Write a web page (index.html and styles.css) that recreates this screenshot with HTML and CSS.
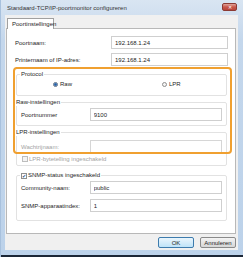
FILE: index.html
```html
<!DOCTYPE html>
<html lang="nl">
<head>
    <meta charset="UTF-8">
    <title>Standaard-TCP/IP-poortmonitor configureren</title>
    <link rel="stylesheet" href="styles.css">
</head>
<body>
    <div class="window">
        <div class="titlebar">
            <span class="title">Standaard-TCP/IP-poortmonitor configureren</span>
            <span class="close">&#x2715;</span>
        </div>
        <div class="client">
            <div class="tabs">
                <div class="tab">Poortinstellingen</div>
            </div>
            <div class="panel">
                <div class="row">
                    <label>Poortnaam:</label>
                    <input class="field wide" type="text" value="192.168.1.24">
                </div>
                <div class="row second">
                    <label>Printernaam of IP-adres:</label>
                    <input class="field wide" type="text" value="192.168.1.24">
                </div>

                <fieldset class="group protocol">
                    <legend>Protocol</legend>
                    <div class="radios">
                        <label class="option"><span class="radio checked"></span>Raw</label>
                        <label class="option"><span class="radio"></span>LPR</label>
                    </div>
                </fieldset>

                <fieldset class="group raw">
                    <legend class="flush">Raw-instellingen</legend>
                    <div class="row inner">
                        <label>Poortnummer</label>
                        <input class="field" type="text" value="9100">
                    </div>
                </fieldset>

                <fieldset class="group lpr">
                    <legend class="flush">LPR-instellingen</legend>
                    <div class="row inner">
                        <label class="disabled">Wachtrijnaam:</label>
                        <input class="field" type="text" value="" disabled>
                    </div>
                    <label class="option check-line disabled"><span class="check"></span>LPR-bytetelling ingeschakeld</label>
                </fieldset>

                <fieldset class="group snmp">
                    <legend><label class="option"><span class="check checked">&#x2714;</span>SNMP-status ingeschakeld</label></legend>
                    <div class="row inner">
                        <label>Community-naam:</label>
                        <input class="field" type="text" value="public">
                    </div>
                    <div class="row inner">
                        <label>SNMP-apparaatindex:</label>
                        <input class="field" type="text" value="1">
                    </div>
                </fieldset>

                <div class="highlight"></div>
            </div>
            <div class="buttons">
                <button class="btn default">OK</button>
                <button class="btn">Annuleren</button>
            </div>
        </div>
        <div class="bottom-edge"></div>
    </div>
</body>
</html>
```

FILE: styles.css
```css
body {
    margin: 0;
    padding: 0;
    font-family: 'Liberation Sans', Arial, sans-serif;
    font-size: 6px;
    color: #1e1e1e;
    background: #c2d6ec;
}

.window {
    width: 243px;
    height: 257px;
    overflow: hidden;
    background: linear-gradient(180deg, #d9e5f2, #c4d7ec 40px, #bcd2ea);
    box-sizing: border-box;
    border-left: 1px solid #a8c1dd;
    display: flex;
    flex-direction: column;
}

.titlebar {
    height: 15px;
    display: flex;
    align-items: center;
    padding-left: 6px;
    padding-right: 6px;
}

.title {
    color: #333;
    flex: 1;
}

.close {
    width: 15px;
    height: 8px;
    box-sizing: border-box;
    background: linear-gradient(180deg, #e0a39a, #c9574a 50%, #b8443a);
    border: 1px solid #8c3a33;
    border-radius: 2px;
    color: #fff;
    font-size: 5px;
    line-height: 6px;
    text-align: center;
    margin-top: -2px;
}

.client {
    margin-left: 4px;
    width: 233px;
    height: 235px;
    background: #f0f0f0;
    box-sizing: border-box;
    padding: 3px 2px 0 1px;
    display: flex;
    flex-direction: column;
}

.tabs {
    display: flex;
    padding-left: 1px;
    position: relative;
    z-index: 1;
}

.tab {
    height: 11px;
    padding: 0 4px;
    box-sizing: border-box;
    border: 1px solid #a0a0a0;
    border-bottom: none;
    background: #fff;
    line-height: 10px;
    width: 47px;
    margin-bottom: -1px;
}

.panel {
    position: relative;
    height: 206px;
    border: 1px solid #b8b8b8;
    background: #fff;
    box-sizing: border-box;
    padding: 7px 5px 0 8px;
}

.row {
    display: flex;
    align-items: center;
    height: 13px;
}

.row label {
    width: 96px;
}

.row.second {
    margin-top: 4px;
}

.field {
    height: 13px;
    box-sizing: border-box;
    border: 1px solid #cfcfcf;
    background: #fff;
    font: inherit;
    color: #1e1e1e;
    padding: 0 3px;
    margin: 0;
    outline: none;
}

.field.wide {
    width: 117px;
}

.group {
    margin: 0 3px 0 1px;
    padding: 0 4px;
    border: 1px solid #e2e2e2;
    border-radius: 2px;
    min-width: 0;
}

.group legend {
    padding: 0 1px;
    line-height: 7px;
    margin-left: -1px;
}

.group legend.flush {
    margin-left: -5px;
    padding-left: 0;
}

.protocol {
    margin-top: 5px;
    height: 25px;
    box-sizing: border-box;
}

.radios {
    display: grid;
    grid-template-columns: 109px 1fr;
    padding: 3px 0 0 32px;
}

.option {
    display: flex;
    align-items: center;
}

.radio {
    width: 5px;
    height: 5px;
    border: 1px solid #8e8f8f;
    border-radius: 50%;
    background: #f4f4f4;
    margin-right: 2px;
    box-sizing: border-box;
}

.radio.checked {
    border-color: #5d6f83;
    background: radial-gradient(circle, #2a5f9e 0, #3d7bc4 1.3px, #e8eef5 1.6px);
}

.raw {
    margin-top: 3px;
    height: 27px;
    box-sizing: border-box;
}

.inner label {
    width: 69px;
}

.inner .field {
    width: 133px;
}

.raw .inner {
    margin-top: 2px;
}

.lpr {
    margin-top: 3px;
    height: 37px;
    box-sizing: border-box;
}

.lpr .inner {
    margin-top: 4px;
}

.field:disabled {
    background: #fff;
    border-color: #d6d6d6;
}

.disabled {
    color: #a3a3a3;
}

.check-line {
    margin-top: 3px;
    margin-left: 1px;
}

.check {
    width: 6px;
    height: 6px;
    box-sizing: border-box;
    border: 1px solid #bdbdbd;
    background: #f4f4f4;
    margin-right: 1px;
    font-size: 5px;
    line-height: 4px;
    text-align: center;
    color: #2a4f80;
}

.check.checked {
    border-color: #8e8f8f;
    background: #fff;
}

.snmp {
    margin-top: 6px;
    height: 49px;
    box-sizing: border-box;
}

.snmp .inner {
    margin-top: 5px;
}

.snmp .inner:first-of-type {
    margin-top: 2px;
}

.highlight {
    position: absolute;
    left: 6px;
    top: 38px;
    width: 219px;
    height: 87px;
    box-sizing: border-box;
    border: 2px solid #f0a030;
    border-radius: 4px;
    pointer-events: none;
}

.buttons {
    display: flex;
    justify-content: flex-end;
    gap: 6px;
    margin-top: 3px;
}

.btn {
    width: 36px;
    height: 11px;
    box-sizing: border-box;
    font: inherit;
    color: #1e1e1e;
    background: linear-gradient(180deg, #f4f4f4, #e4e4e4 50%, #d6d6d6);
    border: 1px solid #8a8a8a;
    border-radius: 2px;
    padding: 0;
    cursor: pointer;
}

.btn.default {
    border-color: #3d7bad;
    background: linear-gradient(180deg, #eaf6fd, #d5ecfa 50%, #bee3f8);
}

.bottom-edge {
    margin-top: auto;
    height: 2px;
    background: #1b2636;
}
```
